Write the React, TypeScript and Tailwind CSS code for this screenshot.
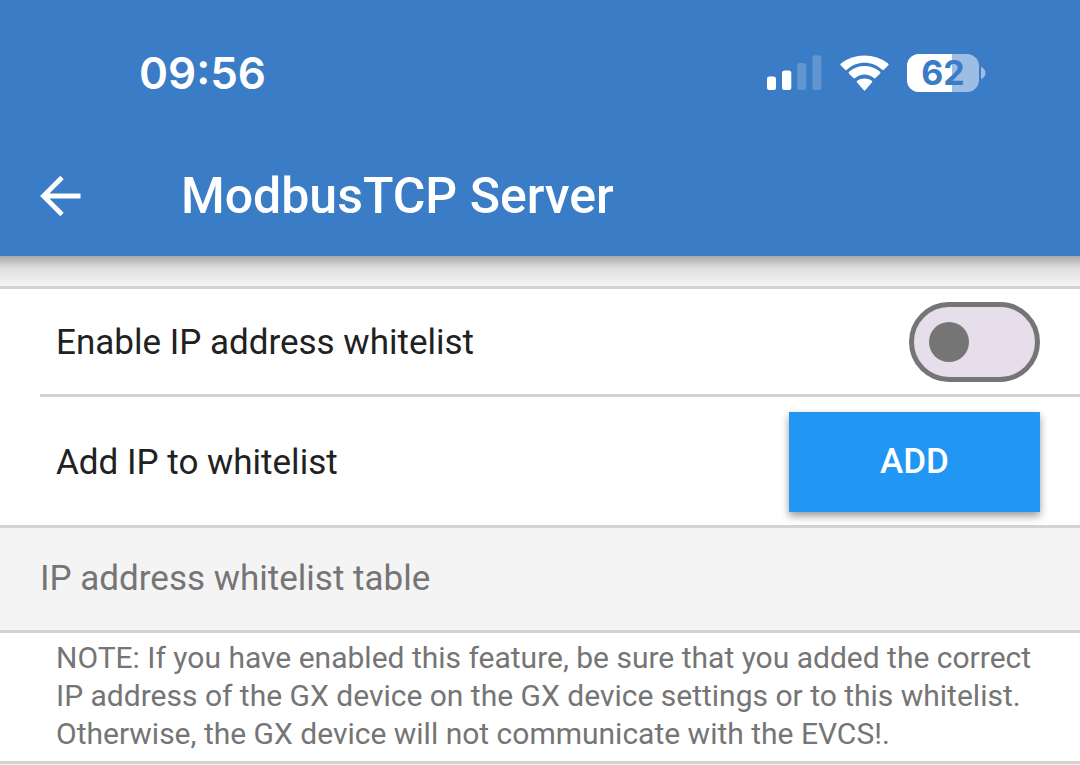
import { useState } from "react";

function SignalIcon() {
  return (
    <svg width="55" height="36" viewBox="0 0 55 36" fill="white" aria-hidden="true">
      <rect x="0" y="21.5" width="9" height="13.5" rx="2.6" />
      <rect x="15" y="15.5" width="9.3" height="19.5" rx="2.6" />
      <rect x="30.2" y="8" width="9" height="27" rx="2.6" opacity="0.2" />
      <rect x="45.4" y="0.3" width="9" height="34.7" rx="2.6" opacity="0.2" />
    </svg>
  );
}

function WifiIcon() {
  return (
    <svg width="49" height="36" viewBox="0 0 49 36" fill="white" aria-hidden="true">
      <path d="M24.5 7.7c6.6 0 12.9 2.6 17.6 7a1.3 1.3 0 0 0 1.8 0l4.2-4.2a1.3 1.3 0 0 0 0-1.9C34.9-2.1 14.1-2.1.9 8.600a1.3 1.3 0 0 0 0 1.9l4.2 4.2a1.3 1.3 0 0 0 1.8 0c4.700-4.400 11-7 17.600-7z" />
      <path d="M24.5 19.6c3.5 0 6.8 1.3 9.3 3.5a1.3 1.3 0 0 0 1.8 0l4.4-4.4a1.3 1.3 0 0 0 0-1.9c-8.7-7.7-22.3-7.7-31 0a1.3 1.3 0 0 0 0 1.9l4.4 4.4a1.3 1.3 0 0 0 1.8 0c2.5-2.2 5.8-3.5 9.3-3.5z" />
      <path d="M31.9 27.6a1.2 1.2 0 0 0-.1-1.8c-4.2-3.2-10.4-3.2-14.6 0a1.2 1.2 0 0 0-.1 1.8l6.5 7.3a1.2 1.2 0 0 0 1.8 0z" />
    </svg>
  );
}

function Battery({ level }: { level: number }) {
  return (
    <div className="flex items-center gap-0.5" role="img" aria-label={`Battery ${level}%`}>
      <div className="relative flex h-[38px] w-[72px] items-center justify-center rounded-xl bg-[#9dbde3]">
        <div className="absolute inset-y-0 left-0 rounded-l-xl bg-white" style={{ width: `${level}%` }} />
        <span className="relative font-[Inter,sans-serif] text-[34px] leading-[38px] font-bold text-[#3a7cc6]">
          {level}
        </span>
      </div>
      <svg width="5" height="12" viewBox="0 0 5 12" fill="#9dbde3" aria-hidden="true">
        <path d="M0 0c2.5.7 4.5 3 4.5 6S2.5 11.3 0 12z" />
      </svg>
    </div>
  );
}

export default function App() {
  const [enabled, setEnabled] = useState(false);

  return (
    <div className="min-h-screen bg-[#f4f4f4] font-[Roboto,sans-serif] text-[35px] leading-[42px] text-[#212121]">
      <header className="bg-[#3a7cc6] text-white">
        <div className="flex h-36 items-center justify-between pt-px pr-[94px] pl-[139px]">
          <time className="font-[Inter,sans-serif] text-[44px] leading-none font-semibold">09:56</time>
          <div className="flex items-center gap-[18px]">
            <SignalIcon />
            <WifiIcon />
            <Battery level={62} />
          </div>
        </div>
        <div className="flex h-28 items-center gap-[100px] px-10 pb-2">
          <button type="button" aria-label="Back" className="flex">
            <svg width="41" height="42" viewBox="0 0 41 42" fill="none" stroke="white" strokeWidth="4.8" aria-hidden="true">
              <path d="M40.500 21H4M22 2.500 3.500 21 22 39.500" />
            </svg>
          </button>
          <h1 className="text-[50px] leading-[60px] font-medium">ModbusTCP Server</h1>
        </div>
      </header>
      <div className="h-[30px] bg-linear-to-b from-[#a9a9a9] via-[#dedede] via-40% to-[#f4f4f4]" />

      <main>
        <section className="border-y-3 border-[#d3d3d3] bg-white">
          <div className="flex h-[105px] items-center justify-between pr-10 pl-14">
            <label htmlFor="whitelist" className="pt-0.5">Enable IP address whitelist</label>
            <input
              id="whitelist"
              type="checkbox"
              role="switch"
              checked={enabled}
              onChange={(e) => setEnabled(e.target.checked)}
              className="flex h-20 w-[131px] appearance-none items-center rounded-full border-5 border-[#757575] bg-[#e6deea] px-[15px] before:size-10 before:rounded-full before:bg-[#757575] checked:justify-end"
            />
          </div>
          <div className="ml-10 flex h-[131px] items-center justify-between border-t-3 border-[#d3d3d3] pt-0.5 pr-10 pl-4">
            <span className="pt-0.5">Add IP to whitelist</span>
            <button
              type="button"
              className="h-[100px] w-[251px] bg-[#2196f3] font-medium text-white shadow-[0_4px_8px_rgba(0,0,0,0.4)]"
            >
              ADD
            </button>
          </div>
        </section>

        <h2 className="px-10 py-[30px] text-[#757575]">IP address whitelist table</h2>

        <p className="border-y-3 border-[#d3d3d3] bg-white pt-[6px] pr-10 pb-2 pl-14 text-[30px] leading-[38px] text-[#757575]">
          NOTE: If you have enabled this feature, be sure that you added the correct IP address of the GX device
          on the GX device settings or to this whitelist. Otherwise, the GX device will not communicate with the
          EVCS!.
        </p>
      </main>
    </div>
  );
}
